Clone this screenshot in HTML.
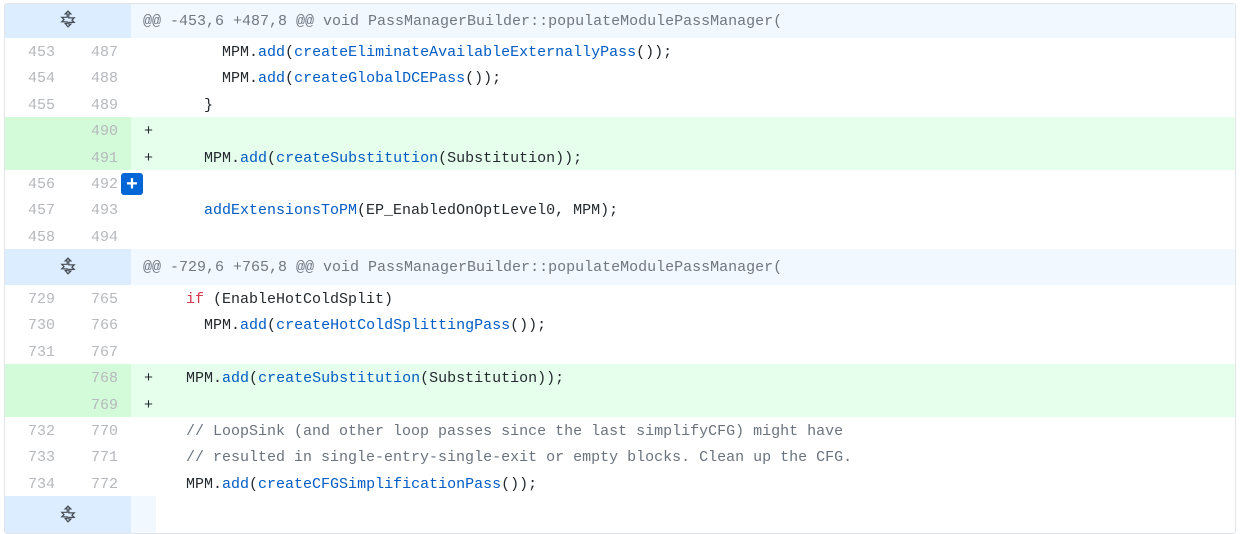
<!DOCTYPE html>
<html><head><meta charset="utf-8"><style>
body{margin:0;background:#fff;width:1240px;height:534px;overflow:hidden;font-family:"Liberation Mono",monospace;font-size:15px}
.box{position:absolute;left:4px;top:3px;width:1230px;height:529px;border:1px solid #e1e4e8;border-radius:3px;overflow:hidden}
.r{position:absolute;left:0;width:1230px;height:26.4px;line-height:26.4px}
.n1,.n2{position:absolute;top:0;height:100%;width:63px;text-align:right;box-sizing:border-box;padding-right:13px;padding-top:2px;color:#b5b8bc}
.n1{left:0}.n2{left:63px}
.c{position:absolute;left:136px;top:2px;white-space:pre;color:#24292e}
.m{position:relative;left:3px}
.add{background:#e6ffed}.add .n1,.add .n2{background:#d4fbd9}
.h{position:absolute;left:0;width:1230px;background:#f1f8ff}
.h .g{position:absolute;left:0;top:0;width:126px;height:100%;background:#dbedff}
.h .t{position:absolute;left:138px;top:1px;color:#6f7781;white-space:pre}
.h svg{position:absolute;left:54px}
.b{color:#005cc5}.k{color:#d73a49}.cm{color:#6a737d}
.plus{position:absolute;left:116px;top:169px;width:22px;height:22px;background:#0366d6;border-radius:3px;color:#fff;text-align:center;line-height:22px;font-family:"Liberation Sans",sans-serif;font-size:20px;font-weight:bold}
</style></head><body><div class="box">
<svg width="0" height="0" style="position:absolute"><defs><symbol id="u" viewBox="0 0 16 16"><path d="M8 1l-2.5 2.5h1.8v3H2.5l2 2-2 2h4.8v1.5H5.5L8 15l2.5-2.5H8.7V11h4.8l-2-2 2-2H8.7V3.5h1.8z" fill="none" stroke="#444d56" stroke-width="1.1"/></symbol></defs></svg>
<div class="h" style="top:0;height:34px;line-height:34px"><div class="g"></div><svg width="18" height="18" style="top:6px"><use href="#u"/></svg><span class="t">@@ -453,6 +487,8 @@ void PassManagerBuilder::populateModulePassManager(</span></div>
<div class="r" style="top:34px"><span class="n1">453</span><span class="n2">487</span><span class="c">         MPM.<span class="b">add</span>(<span class="b">createEliminateAvailableExternallyPass</span>());</span></div>
<div class="r" style="top:60.4px"><span class="n1">454</span><span class="n2">488</span><span class="c">         MPM.<span class="b">add</span>(<span class="b">createGlobalDCEPass</span>());</span></div>
<div class="r" style="top:86.8px"><span class="n1">455</span><span class="n2">489</span><span class="c">       }</span></div>
<div class="r add" style="top:113.2px"><span class="n1"></span><span class="n2">490</span><span class="c"><span class="m">+</span></span></div>
<div class="r add" style="top:139.6px"><span class="n1"></span><span class="n2">491</span><span class="c"><span class="m">+</span>      MPM.<span class="b">add</span>(<span class="b">createSubstitution</span>(Substitution));</span></div>
<div class="r" style="top:166px"><span class="n1">456</span><span class="n2">492</span><span class="c"> </span></div>
<div class="r" style="top:192.4px"><span class="n1">457</span><span class="n2">493</span><span class="c">       <span class="b">addExtensionsToPM</span>(EP_EnabledOnOptLevel0, MPM);</span></div>
<div class="r" style="top:218.8px"><span class="n1">458</span><span class="n2">494</span><span class="c"> </span></div>
<div class="h" style="top:245px;height:36px;line-height:36px"><div class="g"></div><svg width="18" height="18" style="top:8px"><use href="#u"/></svg><span class="t">@@ -729,6 +765,8 @@ void PassManagerBuilder::populateModulePassManager(</span></div>
<div class="r" style="top:281px"><span class="n1">729</span><span class="n2">765</span><span class="c">     <span class="k">if</span> (EnableHotColdSplit)</span></div>
<div class="r" style="top:307.4px"><span class="n1">730</span><span class="n2">766</span><span class="c">       MPM.<span class="b">add</span>(<span class="b">createHotColdSplittingPass</span>());</span></div>
<div class="r" style="top:333.8px"><span class="n1">731</span><span class="n2">767</span><span class="c"> </span></div>
<div class="r add" style="top:360.2px"><span class="n1"></span><span class="n2">768</span><span class="c"><span class="m">+</span>    MPM.<span class="b">add</span>(<span class="b">createSubstitution</span>(Substitution));</span></div>
<div class="r add" style="top:386.6px"><span class="n1"></span><span class="n2">769</span><span class="c"><span class="m">+</span></span></div>
<div class="r" style="top:413px"><span class="n1">732</span><span class="n2">770</span><span class="c">     <span class="cm">// LoopSink (and other loop passes since the last simplifyCFG) might have</span></span></div>
<div class="r" style="top:439.4px"><span class="n1">733</span><span class="n2">771</span><span class="c">     <span class="cm">// resulted in single-entry-single-exit or empty blocks. Clean up the CFG.</span></span></div>
<div class="r" style="top:465.8px"><span class="n1">734</span><span class="n2">772</span><span class="c">     MPM.<span class="b">add</span>(<span class="b">createCFGSimplificationPass</span>());</span></div>
<div class="h" style="top:492px;height:37px;width:151px"><div class="g"></div><svg width="18" height="18" style="top:9px"><use href="#u"/></svg></div>
<div class="plus">+</div>
</div></body></html>
